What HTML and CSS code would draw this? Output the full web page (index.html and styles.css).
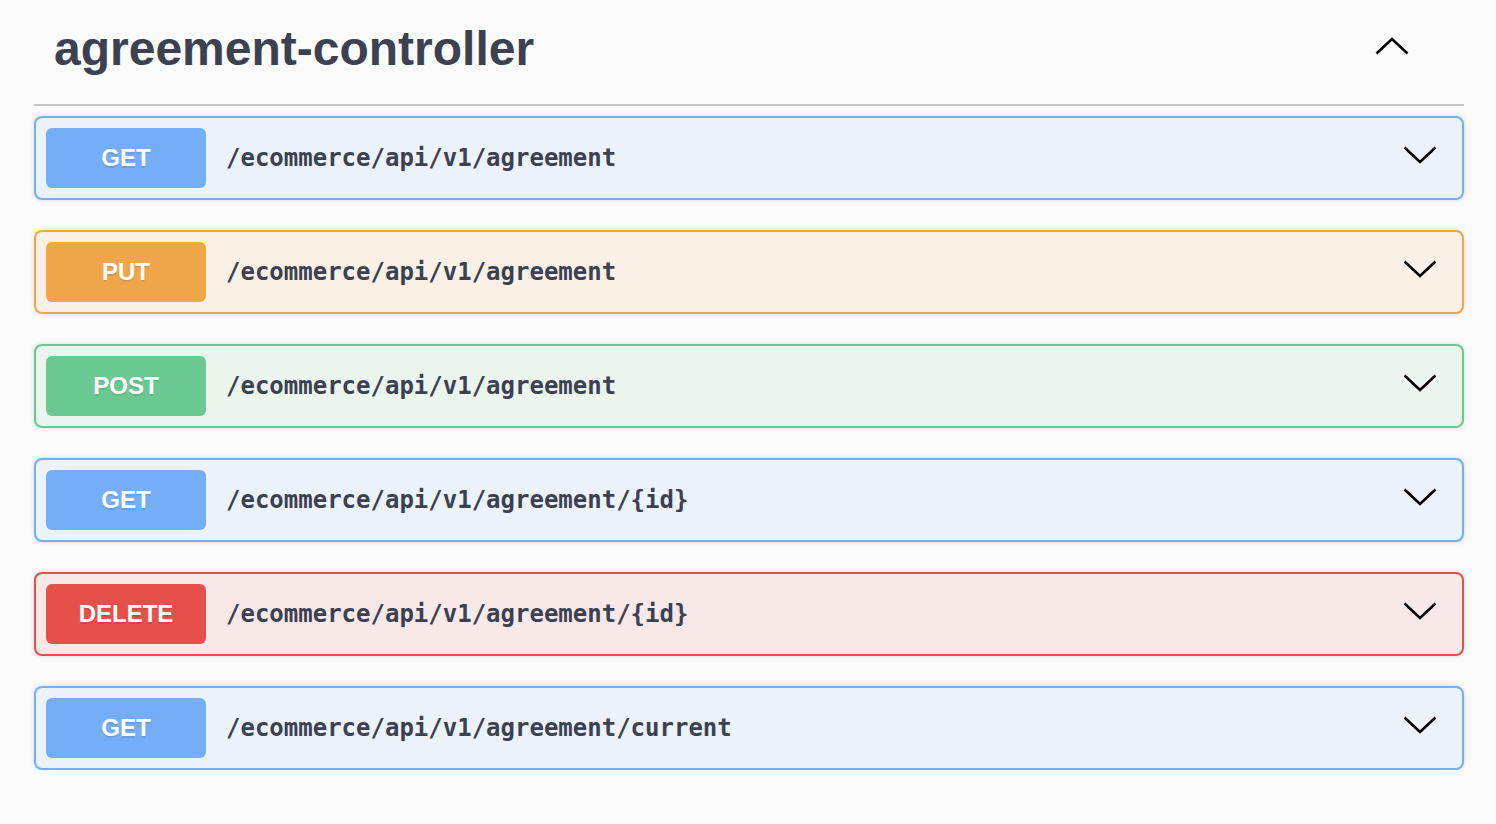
FILE: index.html
```html
<!DOCTYPE html>
<html lang="en">
<head>
<meta charset="utf-8">
<title>agreement-controller</title>
<link rel="stylesheet" href="styles.css">
</head>
<body>
<div class="tag-section">
  <div class="tag-header">
    <h3 class="tag-title">agreement-controller</h3>
    <svg class="chev-up" width="34" height="18" viewBox="0 0 34 18"><path d="M1.5 16.5 L17 2 L32.5 16.5" fill="none" stroke="#000" stroke-width="2.6"/></svg>
  </div>
  <div class="ops">
    <div class="op op-get">
      <span class="method">GET</span>
      <span class="path">/ecommerce/api/v1/agreement</span>
      <svg class="chev" width="34" height="18" viewBox="0 0 34 18"><path d="M1.5 1.5 L17 16 L32.5 1.5" fill="none" stroke="#000" stroke-width="2.6"/></svg>
    </div>
    <div class="op op-put">
      <span class="method">PUT</span>
      <span class="path">/ecommerce/api/v1/agreement</span>
      <svg class="chev" width="34" height="18" viewBox="0 0 34 18"><path d="M1.5 1.5 L17 16 L32.5 1.5" fill="none" stroke="#000" stroke-width="2.6"/></svg>
    </div>
    <div class="op op-post">
      <span class="method">POST</span>
      <span class="path">/ecommerce/api/v1/agreement</span>
      <svg class="chev" width="34" height="18" viewBox="0 0 34 18"><path d="M1.5 1.5 L17 16 L32.5 1.5" fill="none" stroke="#000" stroke-width="2.6"/></svg>
    </div>
    <div class="op op-get">
      <span class="method">GET</span>
      <span class="path">/ecommerce/api/v1/agreement/{id}</span>
      <svg class="chev" width="34" height="18" viewBox="0 0 34 18"><path d="M1.5 1.5 L17 16 L32.5 1.5" fill="none" stroke="#000" stroke-width="2.6"/></svg>
    </div>
    <div class="op op-delete">
      <span class="method">DELETE</span>
      <span class="path">/ecommerce/api/v1/agreement/{id}</span>
      <svg class="chev" width="34" height="18" viewBox="0 0 34 18"><path d="M1.5 1.5 L17 16 L32.5 1.5" fill="none" stroke="#000" stroke-width="2.6"/></svg>
    </div>
    <div class="op op-get">
      <span class="method">GET</span>
      <span class="path">/ecommerce/api/v1/agreement/current</span>
      <svg class="chev" width="34" height="18" viewBox="0 0 34 18"><path d="M1.5 1.5 L17 16 L32.5 1.5" fill="none" stroke="#000" stroke-width="2.6"/></svg>
    </div>
  </div>
</div>
</body>
</html>
```

FILE: styles.css
```css
html, body {
  margin: 0;
  padding: 0;
  background: #fafafa;
}
body {
  font-family: "Liberation Sans", Arial, sans-serif;
  color: #3b4151;
}
.tag-section {
  padding: 0 32px 0 34px;
}
.tag-header {
  display: flex;
  align-items: center;
  justify-content: space-between;
  padding: 21px 0 28px 0;
  border-bottom: 2px solid #c5c6ca;
  margin-bottom: 10px;
}
.tag-title {
  margin: 0;
  padding-left: 20px;
  font-size: 48px;
  font-weight: bold;
  line-height: 55px;
  color: #3b4151;
}
.chev-up {
  margin-right: 55px;
  margin-bottom: 5px;
}
.ops {
  display: flex;
  flex-direction: column;
  gap: 30px;
}
.op {
  display: flex;
  align-items: center;
  padding: 10px;
  border: 2px solid;
  border-radius: 8px;
  box-shadow: 0 0 5px rgba(0, 0, 0, 0.12);
}
.method {
  width: 160px;
  height: 60px;
  line-height: 60px;
  text-align: center;
  border-radius: 6px;
  color: #fff;
  font-size: 24px;
  font-weight: bold;
  text-shadow: 0 2px 0 rgba(0, 0, 0, 0.1);
  flex: none;
}
.path {
  flex: 1;
  padding-left: 20px;
  font-family: "DejaVu Sans Mono", monospace;
  font-weight: bold;
  font-size: 24px;
  color: #3b4151;
}
.chev {
  margin-right: 15px;
  margin-bottom: 6px;
  flex: none;
}
.op-get { background: #ebf2fa; border-color: #74aef8; }
.op-get .method { background: #74aef8; }
.op-put { background: #faf0e6; border-color: #efa54a; }
.op-put .method { background: #efa54a; }
.op-post { background: #ebf5ee; border-color: #6cc893; }
.op-post .method { background: #6cc893; }
.op-delete { background: #f9e8e8; border-color: #e6504a; }
.op-delete .method { background: #e6504a; }
```
